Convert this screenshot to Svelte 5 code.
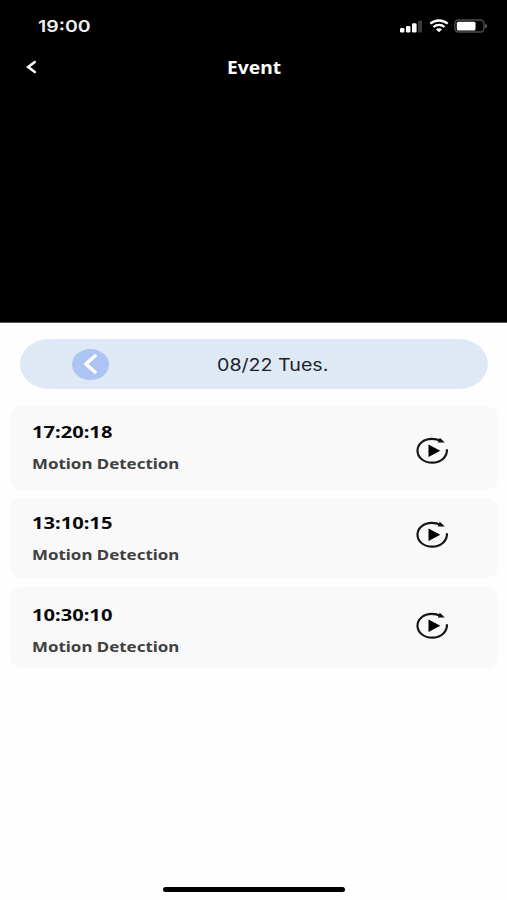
<script lang="ts">
  let events = [
    { time: "17:20:18", label: "Motion Detection", size: "tall" },
    { time: "13:10:15", label: "Motion Detection", size: "short" },
    { time: "10:30:10", label: "Motion Detection", size: "last" },
  ];
</script>

<div class="screen">
  <header class="top">
    <div class="status">
      <span class="clock">19:00</span>
      <svg class="signal" width="22" height="13" viewBox="0 0 22 13">
        <rect x="0" y="8" width="4.4" height="4.5" rx="1.2" fill="#fff" />
        <rect x="6" y="6" width="4.4" height="6.5" rx="1.2" fill="#fff" />
        <rect x="12" y="3.2" width="4.6" height="9.3" rx="1.2" fill="#fff" />
        <rect x="18" y="0.5" width="4" height="12" rx="1" fill="#393939" />
      </svg>
      <svg class="wifi" width="20" height="14" viewBox="0 0 20 14">
        <path d="M1.3 4.7C6.2 .4 13.8 .4 18.7 4.7M4.5 8C7.7 5.1 12.3 5.1 15.5 8" fill="none" stroke="#fff" stroke-width="2.3" />
        <path d="M6.9 10.3C8.7 8.9 11.3 8.9 13.1 10.3L10 13.2Z" fill="#fff" />
      </svg>
      <svg class="battery" width="34" height="14" viewBox="0 0 34 14">
        <rect x="0.9" y="1" width="29" height="12" rx="3.5" fill="none" stroke="#4c4c4c" stroke-width="1.4" />
        <rect x="2.8" y="2.8" width="18.7" height="8.6" rx="1.5" fill="#fff" />
        <path d="M31.2 4.7C33.5 5.5 33.5 8.5 31.2 9.3Z" fill="#666" />
      </svg>
    </div>
    <nav class="title">
      <svg width="10" height="14" viewBox="0 0 10 14">
        <path d="M8.8 2L2.2 7L8.8 12" fill="none" stroke="#fff" stroke-width="2.6" stroke-linecap="round" />
      </svg>
      <h1>Event</h1>
    </nav>
  </header>

  <div class="date">
    <button class="prev" aria-label="Previous day">
      <svg width="14" height="20" viewBox="0 0 14 20">
        <path d="M11 2L1.8 10L11 18" fill="none" stroke="#fff" stroke-width="3.6" stroke-linecap="round" stroke-linejoin="round" />
      </svg>
    </button>
    <span class="day">08/22 Tues.</span>
  </div>

  <ul class="events">
    {#each events as event}
      <li class={event.size}>
        <div class="info">
          <span class="time">{event.time}</span>
          <span class="label">{event.label}</span>
        </div>
        <svg class="play" width="34" height="28" viewBox="0 0 34 28">
          <path d="M32 12.3C32.3 20.3 25.5 25.7 17.3 25.7C8.8 25.7 2.5 20.5 2.5 13.8C2.5 7 8.8 1.8 16.8 1.8C19.8 1.8 22.8 2.4 25.3 3.7" fill="none" stroke="#151515" stroke-width="2.2" />
          <path d="M24.8 0.8L29.8 5.5L22.8 5.5Z" fill="#111" />
          <path d="M13.5 7.6L25.3 13.8L13.5 19.9Z" fill="#000" />
        </svg>
      </li>
    {/each}
  </ul>

  <div class="home"></div>
</div>

<style>
  :global(body) {
    margin: 0;
    background: #fefefe;
  }

  .screen {
    display: flex;
    flex-direction: column;
    width: 507px;
    height: 900px;
    overflow: hidden;
    background: #fefefe;
    font-family: "Noto Sans", "Open Sans", sans-serif;
  }

  .top {
    box-sizing: border-box;
    height: 323px;
    background: #000;
    color: #fff;
    border-bottom: 1px solid #555;
  }

  .status {
    display: flex;
    align-items: center;
    height: 52px;
    padding: 0 19px 0 38px;
  }

  /* lettering is wider than the fonts' own shapes */
  .clock,
  .day,
  .time,
  .label,
  h1 {
    display: block;
    width: max-content;
    white-space: nowrap;
    transform-origin: left center;
  }

  .clock {
    font: 600 16.5px/20px Inter, sans-serif;
    margin-right: auto;
    color: #f0f0f0;
    transform: scaleX(1.18);
  }

  .signal {
    margin-right: 7px;
  }

  .wifi {
    margin-right: 5px;
  }

  .title {
    display: flex;
    align-items: center;
    height: 30px;
    padding-left: 26px;
  }

  h1 {
    margin: 1px 0 0 190.5px;
    font-size: 17px;
    line-height: 24px;
    font-weight: 700;
    transform: scaleX(1.13);
  }

  .date {
    display: flex;
    align-items: center;
    flex: none;
    box-sizing: border-box;
    height: 50px;
    margin: 16px 19px 0 20px;
    padding-left: 52px;
    border-radius: 29px / 25px;
    background: #dfe9f6;
  }

  .prev {
    display: flex;
    align-items: center;
    justify-content: center;
    width: 37px;
    height: 31px;
    padding: 0;
    border: 0;
    border-radius: 50%;
    background: #acc4f3;
  }

  .day {
    margin: 1px 0 0 107.5px;
    font: 400 17px/24px Inter, sans-serif;
    color: #1c222b;
    transform: scaleX(1.155);
  }

  .events {
    display: flex;
    flex-direction: column;
    gap: 8px;
    margin: 17px 9px 0 10px;
    padding: 0;
    list-style: none;
  }

  li {
    display: flex;
    justify-content: space-between;
    align-items: flex-start;
    box-sizing: border-box;
    padding: 14px 49px 0 22px;
    border-radius: 11px;
    background: #f9f9f9;
  }

  .tall {
    height: 84px;
  }

  .short {
    height: 80px;
    padding-top: 13px;
  }

  .last {
    height: 81px;
    margin-top: 1px;
    padding-top: 16px;
  }

  .time {
    font-size: 16.5px;
    line-height: 24px;
    font-weight: 700;
    color: #080808;
    transform: scaleX(1.22);
  }

  .label {
    margin-top: 8px;
    font-size: 14.5px;
    line-height: 22px;
    font-weight: 700;
    color: #404040;
    transform: scaleX(1.165);
  }

  .play {
    margin-top: 17px;
  }

  .short .play {
    margin-top: 10px;
  }

  .last .play {
    margin-top: 9px;
  }

  .home {
    flex: none;
    width: 182px;
    height: 5px;
    margin: auto auto 8px 163px;
    border-radius: 3px;
    background: #000;
  }
</style>
